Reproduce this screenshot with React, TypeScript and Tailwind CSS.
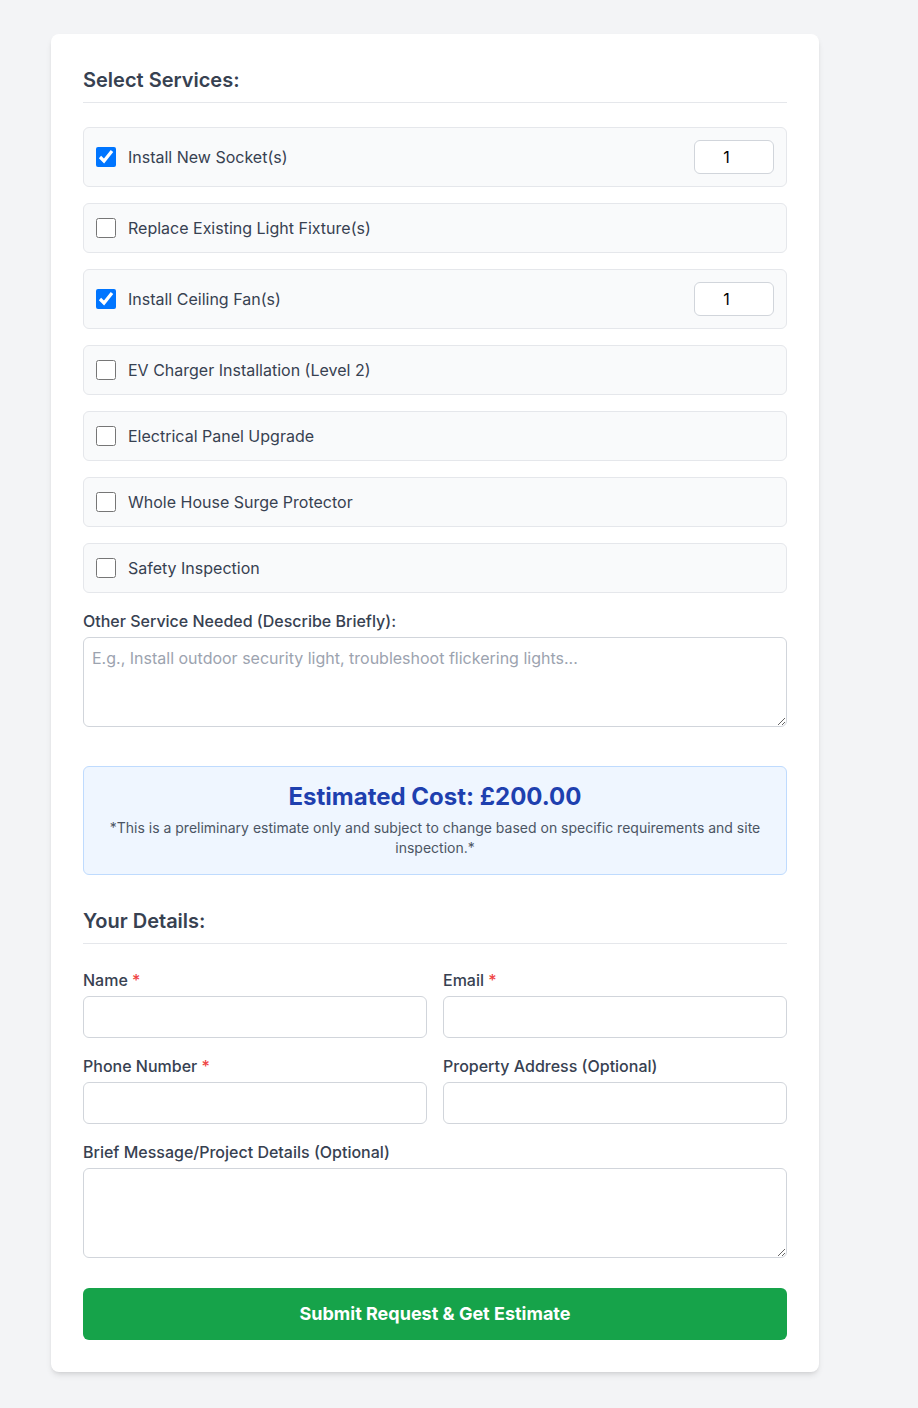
import React, { useState } from "react";

const SERVICES = [
  { id: "socket", label: "Install New Socket(s)", qty: true, checked: true },
  { id: "light", label: "Replace Existing Light Fixture(s)", qty: true, checked: false },
  { id: "fan", label: "Install Ceiling Fan(s)", qty: true, checked: true },
  { id: "ev", label: "EV Charger Installation (Level 2)", qty: false, checked: false },
  { id: "panel", label: "Electrical Panel Upgrade", qty: false, checked: false },
  { id: "surge", label: "Whole House Surge Protector", qty: false, checked: false },
  { id: "inspect", label: "Safety Inspection", qty: false, checked: false },
];

function Field({
  label,
  required,
  type = "text",
}: {
  label: string;
  required?: boolean;
  type?: string;
}) {
  return (
    <div>
      <label className="block text-base font-medium text-[#374151] mb-1">
        {label} {required && <span className="text-[#ef4444]">*</span>}
      </label>
      <input
        type={type}
        className="block w-full px-3 py-2 text-base border border-[#d1d5db] rounded-md bg-white"
      />
    </div>
  );
}

export default function App() {
  const [checked, setChecked] = useState<Record<string, boolean>>(
    Object.fromEntries(SERVICES.map((s) => [s.id, s.checked])),
  );

  return (
    <div className="min-h-[1408px] bg-[#f3f4f6] pl-[51px] pt-[34px] pb-9 font-['Inter',sans-serif]">
      <div className="w-[768px] bg-white rounded-lg shadow-md p-8">
        {/* Services */}
        <h2 className="text-xl font-semibold text-[#374151] pb-2 border-b border-[#e5e7eb] mb-6">
          Select Services:
        </h2>

        <div className="flex flex-col gap-4">
          {SERVICES.map((s) => (
            <div
              key={s.id}
              className="flex items-center justify-between p-3 bg-[#f9fafb] border border-[#e5e7eb] rounded-md"
            >
              <label className="flex items-center cursor-pointer">
                <input
                  type="checkbox"
                  className="h-5 w-5"
                  checked={checked[s.id]}
                  onChange={(e) => setChecked({ ...checked, [s.id]: e.target.checked })}
                />
                <span className="ml-3 text-base text-[#374151]">{s.label}</span>
              </label>
              {s.qty && checked[s.id] && (
                <input
                  type="number"
                  defaultValue={1}
                  min={1}
                  className="w-20 px-2 py-1 text-base text-center border border-[#d1d5db] rounded-md bg-white"
                />
              )}
            </div>
          ))}

          <div>
            <label className="block text-base font-medium text-[#374151] mb-1">
              Other Service Needed (Describe Briefly):
            </label>
            <textarea
              rows={3}
              placeholder="E.g., Install outdoor security light, troubleshoot flickering lights..."
              className="block w-full p-2 text-base border border-[#d1d5db] rounded-md placeholder:text-[#9ca3af]"
            />
          </div>
        </div>

        {/* Estimate */}
        <div className="mt-[39px] p-4 bg-[#eff6ff] border border-[#bfdbfe] rounded-md text-center">
          <h3 className="text-2xl leading-7 font-bold text-[#1e40af] mb-[7px]">Estimated Cost: £200.00</h3>
          <p className="text-sm text-[#4b5563]">
            *This is a preliminary estimate only and subject to change based on specific requirements and site
            inspection.*
          </p>
        </div>

        {/* Details */}
        <h2 className="mt-8 text-xl font-semibold text-[#374151] pb-2 border-b border-[#e5e7eb] mb-6">
          Your Details:
        </h2>

        <div className="grid grid-cols-2 gap-4">
          <Field label="Name" required />
          <Field label="Email" required type="email" />
          <Field label="Phone Number" required type="tel" />
          <Field label="Property Address (Optional)" />
        </div>

        <div className="mt-4">
          <label className="block text-base font-medium text-[#374151] mb-1">
            Brief Message/Project Details (Optional)
          </label>
          <textarea
            rows={3}
            className="block w-full px-3 py-2 text-base border border-[#d1d5db] rounded-md"
          />
        </div>

        <button
          type="submit"
          className="mt-[30px] w-full py-3 bg-[#16a34a] hover:bg-[#15803d] text-white text-lg font-bold rounded-md"
        >
          Submit Request &amp; Get Estimate
        </button>
      </div>
    </div>
  );
}
